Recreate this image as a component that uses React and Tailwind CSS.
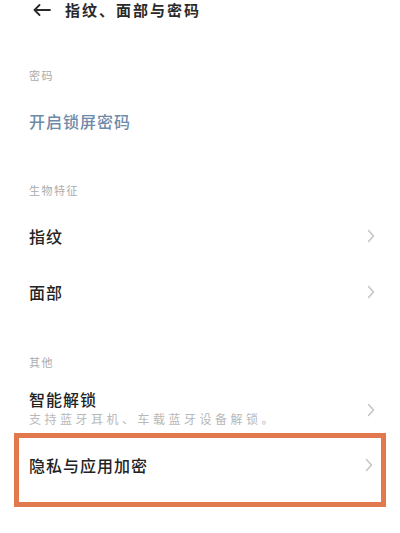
import React from 'react';

const font = { fontFamily: '"Noto Sans CJK SC", "Noto Sans", sans-serif' };

const Chevron = () => (
    <svg width="8" height="14" viewBox="0 0 8 14" fill="none" stroke="#c4c4c4" strokeWidth="1.5" strokeLinecap="round" strokeLinejoin="round">
        <path d="M1.5 1.5 L6.5 7 L1.5 12.5" />
    </svg>
);

const Label = ({ children, className = '' }) => (
    <div className={`h-[36px] flex items-center px-[29px] text-[11px] tracking-[1.5px] text-[#ababab] ${className}`}>
        {children}
    </div>
);

const Row = ({ title, chevron = true, blue = false }) => (
    <div className="h-[56px] flex items-center justify-between pl-[29px] pr-[25px]">
        <span className={`text-[16px] tracking-[1px] font-medium ${blue ? 'text-[#6f8aa8]' : 'text-[#232323]'}`}>{title}</span>
        {chevron && <Chevron />}
    </div>
);

export default function App() {
    return (
        <div className="w-[400px] h-[533px] bg-white overflow-hidden" style={font}>
            {/* Header */}
            <div className="h-[18px] pt-[2px] flex items-center pl-[33px] gap-[14px]">
                <svg width="18" height="12" viewBox="0 0 18 12" fill="none" stroke="#2a2a2a" strokeWidth="1.8" strokeLinecap="round" strokeLinejoin="round">
                    <path d="M17 6 H1.5 M6.5 1 L1.5 6 L6.5 11" />
                </svg>
                <span className="text-[15px] leading-[16px] tracking-[2px] font-semibold text-[#2a2a2a]">指纹、面部与密码</span>
            </div>

            <Label className="mt-[39px]">密码</Label>
            <Row title="开启锁屏密码" chevron={false} blue />

            <Label className="mt-[23px]">生物特征</Label>
            <Row title="指纹" />
            <Row title="面部" />

            <Label className="mt-[24px]">其他</Label>
            <div className="h-[53px] flex items-center justify-between pl-[29px] pr-[25px]">
                <div className="flex flex-col gap-[2px] pt-[2px]">
                    <span className="text-[16px] leading-[19px] tracking-[1px] font-medium text-[#232323]">智能解锁</span>
                    <span className="text-[12px] leading-[15px] tracking-[3.5px] text-[#b8b8b8]">支持蓝牙耳机、车载蓝牙设备解锁。</span>
                </div>
                <div className="mb-[-6px]"><Chevron /></div>
            </div>

            {/* Highlighted row */}
            <div className="mx-[14px] h-[74px] border-[5px] border-[#e2784e] flex items-start justify-between pl-[10px] pr-[8px] pt-[17px]">
                <span className="text-[16px] leading-[20px] tracking-[1px] font-medium text-[#232323]">隐私与应用加密</span>
                <div className="mt-[3px]"><Chevron /></div>
            </div>
        </div>
    );
}
